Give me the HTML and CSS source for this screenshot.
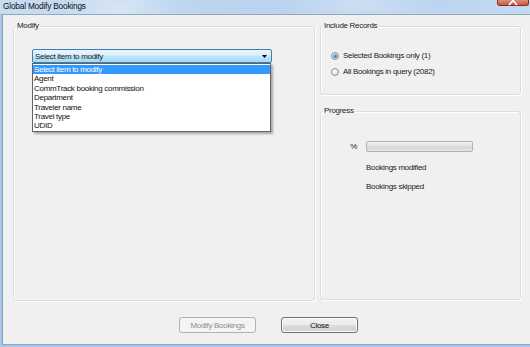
FILE: index.html
```html
<!DOCTYPE html>
<html lang="en">

<head>
  <meta charset="UTF-8">
  <meta name="viewport" content="width=device-width, initial-scale=1.0">
  <title>Global Modify Bookings</title>
  <link rel="stylesheet" href="styles.css">
</head>

<body>

  <div class="window">
    <div class="titlebar">
      <span class="title">Global Modify Bookings</span>
      <span class="close-x">
        <svg width="10" height="7" viewBox="0 0 10 7">
          <path d="M1 -3 L5 1.5 L9 -3 M1 6 L5 1.5 L9 6" stroke="#fff" stroke-width="1.6" fill="none" />
        </svg>
      </span>
    </div>

    <div class="client">
      <div class="groups">
        <fieldset class="group">
          <legend>Modify</legend>
          <div class="combo-wrap">
            <div class="combo">
              <span>Select item to modify</span>
              <svg class="arrow" width="5" height="3" viewBox="0 0 5 3">
                <path d="M0 0 H5 L2.5 3 Z" fill="#000" />
              </svg>
            </div>
            <ul class="dropdown">
              <li class="selected">Select item to modify</li>
              <li>Agent</li>
              <li>CommTrack booking commission</li>
              <li>Department</li>
              <li>Traveler name</li>
              <li>Travel type</li>
              <li>UDID</li>
            </ul>
          </div>
        </fieldset>

        <div class="side">
          <fieldset class="group include">
            <legend>Include Records</legend>
            <div class="radios">
              <label class="radio-row"><span class="radio checked"></span>Selected Bookings only (1)</label>
              <label class="radio-row"><span class="radio"></span>All Bookings in query (2082)</label>
            </div>
          </fieldset>

          <fieldset class="group progress">
            <legend>Progress</legend>
            <div class="bar-row">
              <span class="pct">%</span>
              <div class="bar"></div>
            </div>
            <div class="stat first">Bookings modified</div>
            <div class="stat">Bookings skipped</div>
          </fieldset>
        </div>
      </div>

      <div class="buttons">
        <button class="btn" disabled>Modify Bookings</button>
        <button class="btn">Close</button>
      </div>
    </div>
  </div>

</body>

</html>
```

FILE: styles.css
```css
* {
  box-sizing: border-box;
}

body {
  margin: 0;
  width: 530px;
  height: 347px;
  overflow: hidden;
  background: #a6c6e9;
  font-family: "Liberation Sans", Arial, sans-serif;
  font-size: 8px;
  letter-spacing: -0.3px;
  color: #1b1b1b;
}

.window {
  height: 347px;
  display: flex;
  flex-direction: column;
}

.titlebar {
  height: 14px;
  position: relative;
  padding-left: 3px;
  background:
    radial-gradient(ellipse 60px 30px at 120px 8px, rgba(255, 255, 255, 0.35), transparent),
    radial-gradient(ellipse 80px 30px at 360px 4px, rgba(255, 255, 255, 0.3), transparent),
    linear-gradient(to right, #c9ddf2, #bcd5ef 40%, #b7d1ee 70%, #c3daf2);
}

.title {
  display: block;
  line-height: 13px;
  font-size: 8.3px;
  letter-spacing: -0.2px;
  color: #101010;
}

.close-x {
  position: absolute;
  top: -1px;
  right: 1px;
  width: 32px;
  height: 7px;
  border: 1px solid #7e3326;
  border-top: none;
  border-radius: 0 0 3px 3px;
  background: linear-gradient(#e29a86, #c9553c);
  display: flex;
  justify-content: center;
}

.client {
  height: 331px;
  margin-left: 2px;
  border-left: 1px solid #8e9cae;
  border-top: 1px solid #97a8bb;
  border-bottom: 1px solid #9aa6b4;
  background: #f0f0f0;
  padding: 6px 0 0 10px;
}

.groups {
  display: grid;
  grid-template-columns: 302px 201px;
  column-gap: 5px;
  height: 280px;
}

.group {
  margin: 0;
  padding: 0;
  min-width: 0;
  border: 1px solid #d5dfe5;
  border-radius: 3px;
  box-shadow: inset 1px 1px 0 #fff, 1px 1px 0 #fff;
}

.group legend {
  margin-left: 2px;
  padding: 0 1px;
  line-height: 10px;
}

.combo-wrap {
  position: relative;
  margin: 18px 0 0 18px;
  width: 240px;
}

.combo {
  height: 14px;
  border: 1px solid #3c7fb1;
  border-radius: 2px;
  background: linear-gradient(#eaf5fd 0%, #d9effc 45%, #bee6fd 50%, #a7d9f5 100%);
  display: flex;
  align-items: center;
  justify-content: space-between;
  padding: 0 4px 0 2px;
}

.arrow {
  display: block;
}

.dropdown {
  position: absolute;
  top: 14px;
  left: 0;
  width: 239px;
  margin: 0;
  padding: 1px 0 0;
  list-style: none;
  background: #fff;
  border: 1px solid #646464;
  box-shadow: 2px 2px 2px rgba(0, 0, 0, 0.3);
}

.dropdown li {
  line-height: 9.4px;
  padding-left: 1px;
  color: #111;
}

.dropdown li.selected {
  background: #3399ff;
  color: #fff;
}

.side {
  display: flex;
  flex-direction: column;
  gap: 11px;
}

.include {
  height: 74px;
}

.progress {
  height: 194px;
}

.radios {
  margin: 20px 0 0 10px;
  display: flex;
  flex-direction: column;
  gap: 6px;
}

.radio-row {
  display: flex;
  align-items: center;
  gap: 4px;
  line-height: 10px;
}

.radio {
  width: 8px;
  height: 8px;
  border-radius: 50%;
  border: 1px solid #8e8f8f;
  background: radial-gradient(circle at 40% 35%, #fff, #e0e0e0 70%, #cfcfcf);
  display: flex;
  align-items: center;
  justify-content: center;
}

.radio.checked::after {
  content: "";
  width: 4px;
  height: 4px;
  border-radius: 50%;
  background: radial-gradient(circle at 35% 35%, #7cc0f0, #1f5d96 80%);
}

.bar-row {
  margin-top: 25px;
  display: flex;
  align-items: center;
}

.pct {
  width: 45px;
  text-align: right;
  padding-right: 9px;
}

.bar {
  width: 107px;
  height: 11px;
  border: 1px solid #b2b2b2;
  border-radius: 2px;
  background: linear-gradient(#f2f2f2, #dfdfdf 50%, #d6d6d6 51%, #e4e4e4);
}

.stat {
  padding-left: 45px;
  line-height: 10px;
  margin-top: 9px;
}

.stat.first {
  margin-top: 11px;
}

.buttons {
  display: flex;
  justify-content: center;
  gap: 25px;
  margin-top: 16px;
  padding-right: 6px;
}

.btn {
  width: 77px;
  height: 16px;
  padding: 0;
  font: inherit;
  letter-spacing: -0.3px;
  color: #111;
  border: 1px solid #707070;
  border-radius: 3px;
  background: linear-gradient(#f2f2f2, #ebebeb 50%, #dddddd 51%, #cfcfcf);
  box-shadow: inset 0 0 0 1px #fcfcfc;
}

.btn:disabled {
  color: #8d8d8d;
  border-color: #adb2b5;
  background: #f4f4f4;
  box-shadow: none;
}
```
